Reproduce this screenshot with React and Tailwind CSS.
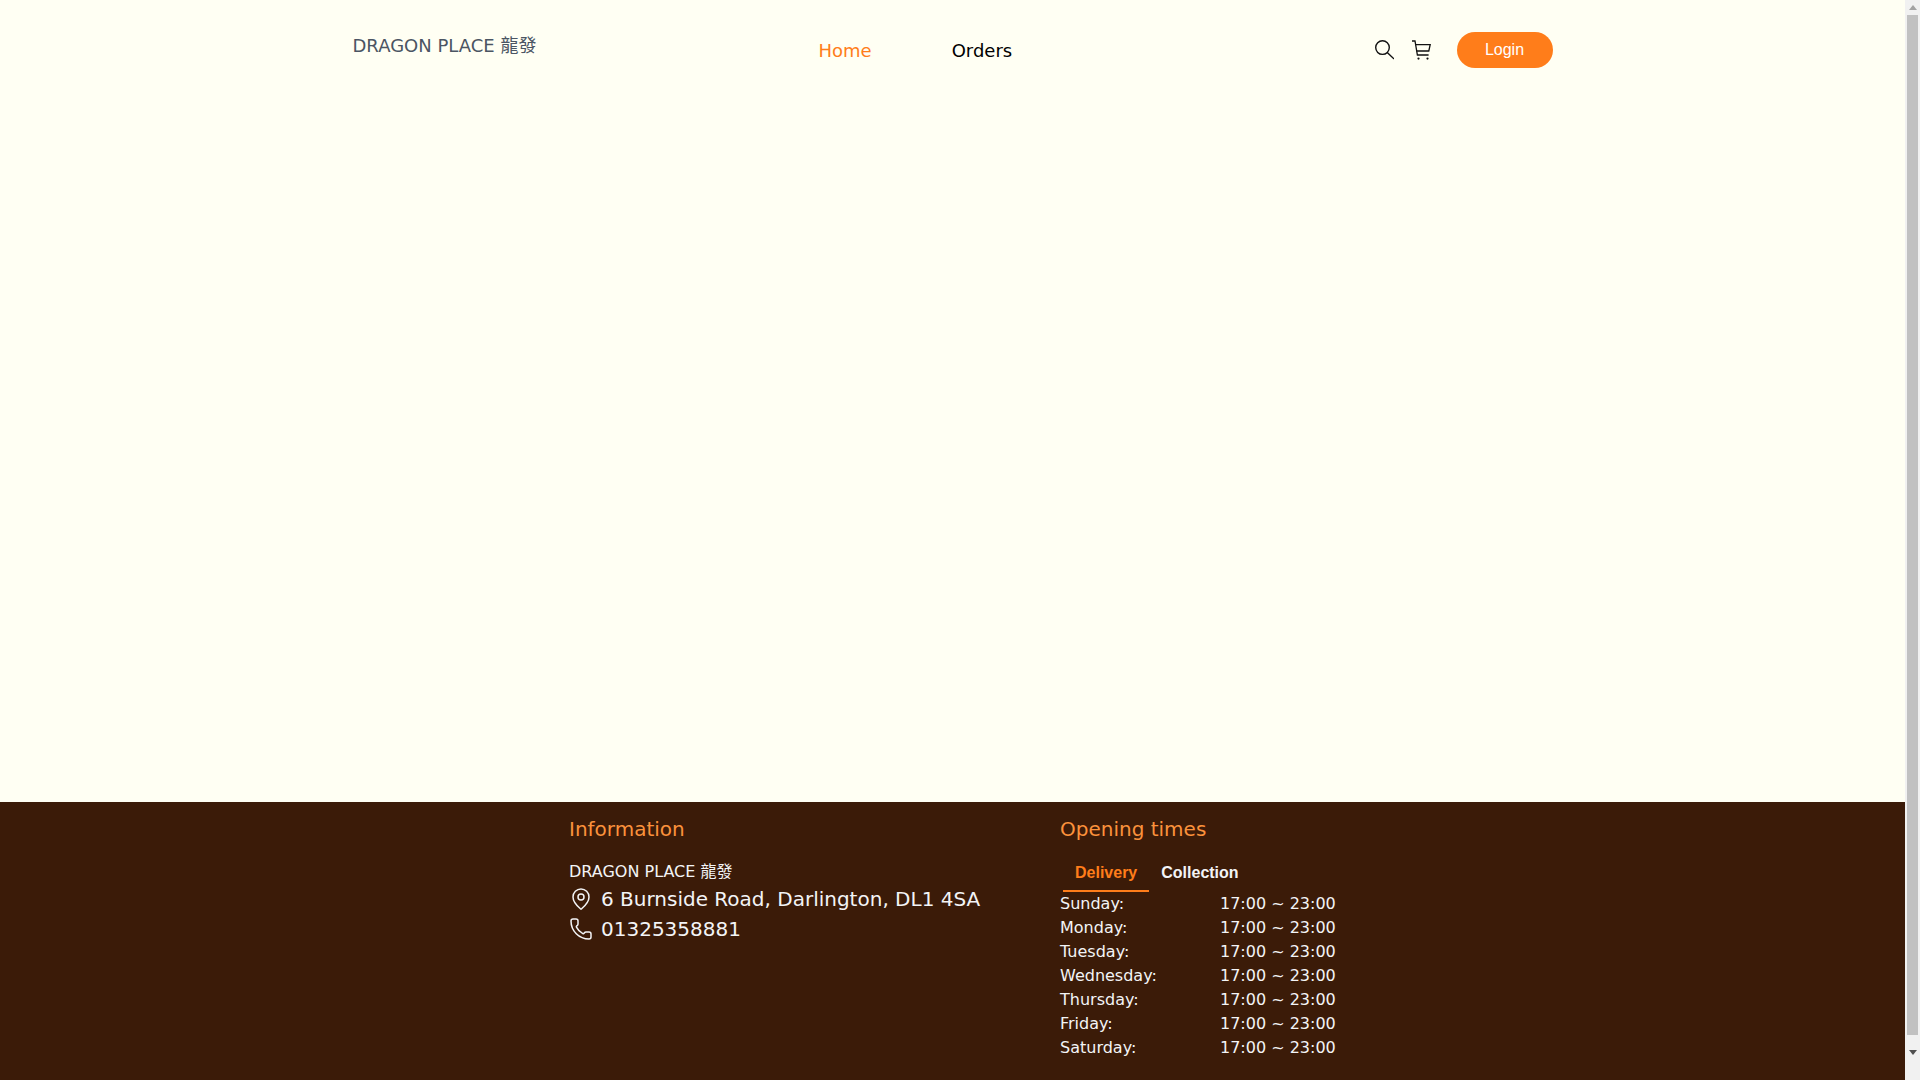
import React from "react";
import { MapPin, Phone } from "lucide-react";

const sans = 'font-["DejaVu_Sans","Noto_Sans_CJK_TC",sans-serif]';
const days = ["Sunday", "Monday", "Tuesday", "Wednesday", "Thursday", "Friday", "Saturday"];

function SearchIcon() {
  return (
    <svg width="20" height="20" viewBox="0 0 20 20" fill="none" stroke="#111" strokeWidth="1.4" strokeLinecap="round" className="mr-[17px]">
      <circle cx="8.5" cy="7.6" r="6.8" />
      <path d="M13.5 12.8 19.6 18.6" />
    </svg>
  );
}

function CartIcon() {
  return (
    <svg width="20" height="20" viewBox="0 0 20 20" fill="none" stroke="#111" strokeWidth="1.3" className="mr-[26px]">
      <path d="M1 1H4L6.4 15H17.6" />
      <path d="M4.6 4.6H19.2L17.8 11H5.6" />
      <circle cx="7.5" cy="18.6" r="1.1" fill="#111" stroke="none" />
      <circle cx="16.5" cy="18.6" r="1.1" fill="#111" stroke="none" />
    </svg>
  );
}

export default function App() {
  return (
    <div className="h-screen flex overflow-hidden">
      <div className={`${sans} bg-[#fffff3] flex-1 min-w-0 flex flex-col h-[1112px]`}>
        <header className="h-[100px] flex-none">
          <div className="max-w-[1200px] mx-auto h-full flex items-center">
            <div className="w-[466px] text-lg text-[#4b5563] pb-[8px] leading-7">DRAGON PLACE 龍發</div>
            <nav className="flex gap-[80px] text-lg leading-7 w-[530px] pt-[2px]">
              <a className="text-[#ff7d1a]">Home</a>
              <a className="text-black">Orders</a>
            </nav>
            <div className="flex items-center flex-1 justify-end">
              <SearchIcon />
              <CartIcon />
              <button className='font-["Liberation_Sans",sans-serif] bg-[#ff7d1a] text-white rounded-full w-[96px] h-9 text-base'>Login</button>
            </div>
          </div>
        </header>
        <main className="h-[702px] flex-none" />
        <footer className="bg-[#3b1b08] flex-1 text-[#f3f4f6]">
          <div className="w-[768px] mx-auto flex">
            <section className="w-[491.5px] pt-[13px] pl-[0.5px]">
              <h3 className="text-xl leading-7 text-[#fb923c]">Information</h3>
              <p className="mt-[17px] text-base leading-6">DRAGON PLACE 龍發</p>
              <div className="flex items-center text-xl leading-[30px]">
                <MapPin size={24} strokeWidth={1.5} className="mr-2" />
                <span>6 Burnside Road, Darlington, DL1 4SA</span>
              </div>
              <div className="flex items-center text-xl leading-[30px]">
                <Phone size={24} strokeWidth={1.5} className="mr-2" />
                <span>01325358881</span>
              </div>
            </section>
            <section className="w-[276.5px] pt-[13px]">
              <h3 className="text-xl leading-7 text-[#fb923c]">Opening times</h3>
              <div className='font-["Liberation_Sans",sans-serif] font-bold text-base flex mt-[12px] ml-[3px]'>
                <div className="px-3 h-[37px] leading-[36px] text-[#ff7d1a] border-b-2 border-[#ff7d1a]">Delivery</div>
                <div className="px-3 h-[37px] leading-[36px] text-[#f3f4f6]">Collection</div>
              </div>
              <div className="text-base leading-6">
                {days.map((d) => (
                  <div key={d} className="flex">
                    <span className="w-[160px]">{d}:</span>
                    <span>17:00 ~ 23:00</span>
                  </div>
                ))}
              </div>
            </section>
          </div>
        </footer>
      </div>
      <aside className="w-[15px] h-screen flex-none bg-[#f1f1f1] flex flex-col items-center">
        <div className="h-[15px] flex-none flex items-center justify-center">
          <svg width="8" height="5" viewBox="0 0 8 5"><path d="M4 0 8 5H0Z" fill="#a3a3a3" /></svg>
        </div>
        <div className="w-[11px] h-[1020px] flex-none bg-[#c1c1c1]" />
        <div className="h-[45px] flex-none flex justify-center pt-[15px]">
          <svg width="8" height="5" viewBox="0 0 8 5"><path d="M0 0H8L4 5Z" fill="#505050" /></svg>
        </div>
      </aside>
    </div>
  );
}
